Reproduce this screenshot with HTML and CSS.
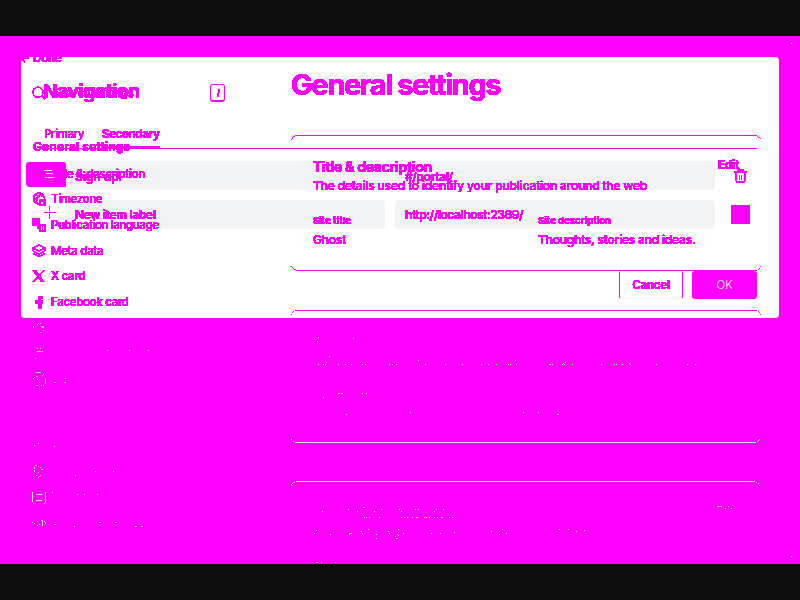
FILE: index.html
```html
<!DOCTYPE html>
<html lang="en">
<head>
<meta charset="utf-8">
<title>General settings</title>
<link rel="stylesheet" href="styles.css">
</head>
<body>
<svg class="defs" width="0" height="0"><filter id="solid" x="-5%" y="-20%" width="110%" height="140%" color-interpolation-filters="sRGB"><feComponentTransfer><feFuncA type="linear" slope="60" intercept="-2"/></feComponentTransfer></filter></svg>
<main class="stage">
  <section class="modal">
    <header class="modal-head"><b class="ink modal-title">Navigation</b></header>
    <nav class="tabs"><span class="ink primary">Primary</span><span class="ink secondary">Secondary</span></nav>
    <div class="nav-row">
      <span></span>
      <div class="field"><span class="ink signup">Sign up</span></div>
      <div class="field"><span class="ink portal">#/portal/</span></div>
      <svg class="trash" viewBox="0 0 14 15" shape-rendering="crispEdges"><path d="M0 3h13M4 2V1h5v1M2 3v8.500l1 1.500h7l1-1.500V3M5.500 5.500v5M7.500 5.500v5" fill="none" stroke="#f0f" stroke-width="1.600"/></svg>
    </div>
    <div class="nav-row">
      <svg class="plus" viewBox="0 0 12 13" shape-rendering="crispEdges"><path d="M0 6.5h12M5.5 0v13" stroke="#f0f"/></svg>
      <div class="field"><span class="ink newitem">New item label</span></div>
      <div class="field"><span class="ink url">http://localhost:2369/</span></div>
      <i class="add"></i>
    </div>
    <footer class="actions"><button class="cancel"><span class="ink">Cancel</span></button><button class="ok">OK</button></footer>
  </section>

  <aside class="sidebar">
    <div class="done"><span class="ink">← Done</span></div>
    <div class="search">
      <svg width="14" height="14" viewBox="0 0 14 14" shape-rendering="crispEdges"><path d="M11 6.200a5 5 0 1 1-10 0 5 5 0 0 1 10 0ZM9.500 9.500l4 4" fill="none" stroke="#f0f" stroke-width="1.800"/></svg>
      <span class="ink search-label">Search settings</span>
      <kbd><svg width="5" height="9" viewBox="0 0 5 9" shape-rendering="crispEdges"><path d="M3.5 0 1.5 8" stroke="#f0f" stroke-width="2"/></svg></kbd>
    </div>
    <b class="ink side-title">General settings</b>
    <ul>
      <li class="active"><i class="highlight"><svg width="10" height="9" viewBox="0 0 10 9" shape-rendering="crispEdges"><path d="M0 1.5h8M2 4.5h7M1 8.5h9" stroke="#fff"/></svg></i><span class="ink desc">Title &amp; description</span></li>
      <li><svg class="icon" viewBox="0 0 14 14" shape-rendering="crispEdges"><circle cx="7" cy="6.500" r="5.500"/><path d="M2 3l5 1-3 3 2 5M7 1l3 3 3 1M2 7h4"/><path d="M8 8h5v5H8z" fill="#f0f"/><path d="M9.5 10v1h1" stroke="#fff"/></svg><span class="ink time">Timezone</span></li>
      <li><svg class="icon" viewBox="0 0 14 14" shape-rendering="crispEdges"><path d="M1 1h6v6H1zM6 6v4h3" fill="#f0f"/><path d="M8 7h5v6H8zM10.5 8v4"/></svg><span class="ink lang">Publication language</span></li>
      <li><svg class="icon" viewBox="0 0 14 14" shape-rendering="crispEdges"><path d="m7 1 5.5 3L7 7 1.5 4zM1 7l6 3 6-3M1 9.5l6 3 6-3M1 4v3M13 4v3" stroke-width="1.9"/></svg><span class="ink meta">Meta data</span></li>
      <li><svg class="icon" viewBox="0 0 14 14" shape-rendering="crispEdges"><path d="M1.5 1.5h2l8 11h-2zM12.5 1 1 13" stroke-width="1.9"/></svg><span class="ink xcard">X card</span></li>
      <li><svg class="icon" viewBox="0 0 14 14" shape-rendering="crispEdges"><path d="M10.5 1H8L6 2.5V5H3v3h3v5h3V8h1V5H8V3h2.5z" fill="#f0f" stroke="#f0f" stroke-width="1"/></svg><span class="ink fb">Facebook card</span></li>
    </ul>
  </aside>

  <section class="content">
    <h1 class="ink">General settings</h1>
    <article class="card">
      <svg class="frame" viewBox="0 0 470 136" shape-rendering="crispEdges"><path d="M4 .5h462M5 135.5h461M0 4.5h1M1 3.500h1M1 2.500h1M2 1.500h2M466 1.500h1M467 2.500h2M469 3.500h1M0 131.500h1M1 132.500h1M2 133.500h1M3 134.500h2M469 131.500h1M468 133.500h1M467 134.500h1"/></svg>
      <div class="card-head"><b class="ink card-title">Title &amp; description</b><b class="ink edit">Edit</b></div>
      <p class="ink summary">The details used to identify your publication around the web</p>
      <div class="details">
        <div><span class="ink label title-label">Site title</span><span class="ink value ghost">Ghost</span></div>
        <div><span class="ink label description-label">Site description</span><span class="ink value thoughts">Thoughts, stories and ideas.</span></div>
      </div>
    </article>
    <svg class="frame-top" viewBox="0 0 470 8" shape-rendering="crispEdges"><path d="M4 .5h462M0 4.500h1M1 2.500h1M2 1.500h1M467 1.500h1M468 2.500h1M469 4.500h1"/></svg>
  </section>

  <svg class="specks" viewBox="0 0 800 600" shape-rendering="crispEdges">
    <path stroke="#f2c6f2" d="M33 326.5h1M33 327.5h1M37 324.5h1M38 323.5h1M40 323.5h1M41 326.5h3M42 327.5h2M43 330.5h1M40 332.5h2M37 348.5h1M40 348.5h1M37 351.5h4M42 351.5h1M35 358.5h1M107 350.5h1M129 350.5h1M148 350.5h1M36 372.5h5M42 375.5h1M43 374.5h1M36 376.5h2M34 377.5h1M33 378.5h1M37 379.5h1M39 382.5h1M36 385.5h2M41 385.5h1M43 385.5h1M54 382.5h2M64 382.5h2M65 378.5h1M45.500 378v6"/>
    <path stroke="#f5cff5" d="M34 445.5h1M38 443.5h1M54 446.5h1M35 465.5h2M38 466.5h1M40 467.5h1M41 469.5h2M34.5 467v2M34.500 470v2M38 472.5h1M36 475.5h1M40 475.5h1M39 476.5h1M38 477.5h1M75 475.5h1M95 471.5h1M113 471.5h1M52 492.5h1M77 494.5h1M84 494.500h1M97 494.5h1"/>
    <path stroke="#fce8fc" d="M32.5 492v10M45.5 492v11M36 494.5h6M36 500.5h6M33 503.5h1M44 503.5h1M32 522.5h1M34 523.5h1M37 521.5h1M37 525.5h1M39 524.5h1M41 520.5h2M42.5 520v6M44 521.5h1M45.500 522v2M54 524.5h2M74 526.5h1M99 522.5h2M115 522.5h2M135 526.5h2M141 526.5h2"/>
    <path stroke="#dceadc" d="M295 442.500h461M291 439.5h1M293 441.5h1M757 441.5h1M758 440.5h1M759 439.5h1M318 337.5h1M317 341.5h1M353 338.5h1M329 356.5h1M326 362.5h1M318 364.5h1M323 364.5h1M325 364.5h1M338 364.5h1M345 364.5h1M351 364.5h1M362 364.5h1M365 364.5h1M389 364.5h1M392 364.5h1M396 364.5h1M418 360.5h1M425 364.5h1M445 364.5h1M462 364.5h1M481 364.5h1M488 364.5h1M496 364.5h1M508 364.5h1M510 364.5h1M515 360.5h1M516 364.5h1M549 364.5h2M552 364.5h1M562 364.5h1M563 363.5h1M564 364.5h1M565 362.5h1M572 364.5h1M601 364.5h1M614 364.5h1M616 364.5h1M622 364.5h1M629 363.5h1M630 364.5h1M656 364.5h1M687 364.5h1M695 364.5h1M338 393.5h2M341 393.5h2M362 393.5h1M366 393.5h1M323 397.5h1M346 414.5h1M410 412.5h1M523 412.5h1M538 412.5h1M557 414.5h2"/>
    <path stroke="#ffd9ff" d="M296 481.5h459M293 482.5h2M292 483.5h1M291.5 484v2M756 482.5h1M758 483.5h1M759 485.5h1M322 511.5h1M348 509.5h1M357 511.5h1M363 507.5h2M374 511.5h1M381 509.5h1M399 509.5h1M401 511.5h1M415 509.5h1M418 509.5h1M434 511.5h1M436 509.5h1M443 509.5h1M364 517.5h1M366 517.5h1M369 517.5h1M379 517.5h1M401 517.5h1M404 517.5h1M407 517.5h1M412 517.5h1M416 517.5h2M424 517.5h1M426 517.5h1M429 517.5h1M434 517.5h1M437 517.5h1M441 517.5h2M449 517.5h1M452 517.5h1"/>
    <path stroke="#ffe4ff" d="M316 530.5h1M314 533.5h1M330 534.5h1M349 533.5h3M349 534.5h1M361 531.5h1M362 533.5h1M368 529.5h1M376 534.5h1M376 538.500h1M388 531.5h1M389 533.5h1M398 529.5h1M397 534.5h1M398 535.5h1M395 536.5h1M396 538.5h2M403 533.5h1M431 533.5h1M440 533.5h1M454 532.5h1M491 531.5h1M502 529.5h1M499 534.5h1M506 533.5h1M559 529.5h1M568 529.5h1M576 531.5h1M584 530.500h1M316 562.5h2M321 562.5h1M335 562.5h1M717 506.5h5M725 508.5h1M728 506.5h1M731 508.5h1M791 556.500h1M791 43.500h1"/>
  </svg>
</main>
</body>
</html>
```
FILE: styles.css
```css
* { box-sizing: border-box; }
body { margin: 0; width: 800px; height: 600px; padding: 36px 0; overflow: hidden; background: #0e0e0e; font-family: Inter, "Liberation Sans", sans-serif; color: #f0f; }
.defs { position: absolute; }
.stage { position: relative; height: 528px; padding: 21px; background: #f0f; }
ul, h1, p { margin: 0; padding: 0; }
.ink { display: inline-block; white-space: nowrap; filter: url(#solid); }

.modal { width: 758px; height: 261px; padding: 22px 22px 0 23px; border-radius: 4px; background: #fff; }
.modal-head { height: 46px; line-height: 26px; }
.modal-title { font-size: 19px; margin-left: -1px; letter-spacing: -.35px; }
.tabs { display: flex; gap: 17px; height: 24px; width: 713px; line-height: 18px; font-size: 11.5px; border-bottom: 1px solid #f0f; margin-bottom: 12px; }
.tabs .primary { width: 41px; letter-spacing: -.3px; }
.tabs .secondary { width: 58px; height: 24px; font-weight: 700; letter-spacing: -.4px; border-bottom: 3px solid #f0f; }
.nav-row { display: grid; grid-template-columns: 21px 320px 330px 46px; height: 29px; margin-bottom: 10px; align-items: center; }
.nav-row .field { height: 29px; padding-left: 10px; line-height: 30px; border-radius: 4px; background: #f1f3f4; font-size: 12px; font-weight: 600; }
.nav-row .field + .field { margin-left: 10px; }
.signup { line-height: 32px; }
.portal { line-height: 32px; letter-spacing: -.35px; }
.newitem { letter-spacing: -.33px; }
.url { letter-spacing: -.44px; }
.trash { width: 14px; height: 15px; margin: 2px 0 0 19px; }
.plus { width: 12px; height: 13px; margin-top: -5px; }
.add { width: 19px; height: 19px; margin-left: 16px; background: #f0f; }
.actions { display: flex; justify-content: flex-end; gap: 9px; margin-top: 42px; }
.actions button { width: 65px; height: 28px; padding: 0; border: 0; font: 600 11.5px Inter, sans-serif; color: #f0f; background: #fff; }
.actions .cancel { position: relative; z-index: 1; width: 64px; letter-spacing: -.15px; border: 1px solid #f0f; border-top-color: #f4f4f4; border-bottom-color: #f4f4f4; border-radius: 0 0 3px 3px; }
.actions .ok { background: #f0f; color: #fff; font-weight: 300; border-radius: 3px; }

.sidebar { position: absolute; left: 21px; top: 14px; width: 240px; font-size: 11.5px; font-weight: 500; }
.done { height: 32px; line-height: 16px; font-size: 12px; font-weight: 600; margin-left: -2px; letter-spacing: -.4px; }
.search { display: flex; align-items: center; height: 21px; padding-left: 11px; gap: 8px; }
.search-label { width: 148px; letter-spacing: -.4px; }
kbd { display: flex; width: 15px; height: 18px; padding: 4px 0 0 5px; border: 1px solid #f0f; border-bottom-width: 2px; border-radius: 3px; }
.side-title { display: block; width: 110px; line-height: 16px; margin: 36px 0 6px 12px; font-size: 12px; letter-spacing: .1px; }
.sidebar ul { list-style: none; }
.sidebar li { display: flex; align-items: center; height: 25.6px; padding-left: 11px; gap: 5px; letter-spacing: -.3px; }
.sidebar .active { padding-left: 5px; gap: 0; }
.icon { width: 14px; height: 14px; fill: none; stroke: #f0f; stroke-width: 1.7; }
.highlight { display: flex; align-items: center; width: 40px; height: 25px; margin-top: 2px; padding: 0 0 2px 18px; background: #f0f; border-radius: 3px 2px 0 4px; }
.desc { margin-left: -15px; }
.sidebar .lang { letter-spacing: -.37px; }
.sidebar .time { letter-spacing: -.37px; }

.content { position: absolute; left: 291px; top: 31px; width: 470px; }
h1 { display: block; height: 36px; line-height: 36px; font-size: 29px; font-weight: 700; letter-spacing: -1.4px; }
.card { position: relative; height: 136px; margin-top: 32px; padding: 22px 22px 0; }
.frame, .frame-top { display: block; fill: none; stroke: #f0f; stroke-width: 1; width: 470px; }
.frame { position: absolute; left: 0; top: 0; height: 136px; }
.frame-top { height: 8px; margin-top: 39px; }
.card-head { display: flex; justify-content: space-between; height: 19px; line-height: 19px; }
.card-title { font-size: 14px; letter-spacing: -.28px; }
.edit { font-size: 12px; line-height: 15px; letter-spacing: -.3px; }
.summary { display: block; margin-top: 2px; font-size: 12px; font-weight: 500; line-height: 16px; letter-spacing: -.16px; }
.details { display: grid; grid-template-columns: 225px 200px; margin-top: 18px; }
.details > div { display: flex; flex-direction: column; align-items: flex-start; }
.label { font-size: 9.5px; font-weight: 700; line-height: 18px; }
.value { font-size: 12px; font-weight: 500; line-height: 18px; margin-top: 1px; letter-spacing: -.19px; }
.specks { position: absolute; left: 0; top: -36px; width: 800px; height: 600px; fill: none; }
```
